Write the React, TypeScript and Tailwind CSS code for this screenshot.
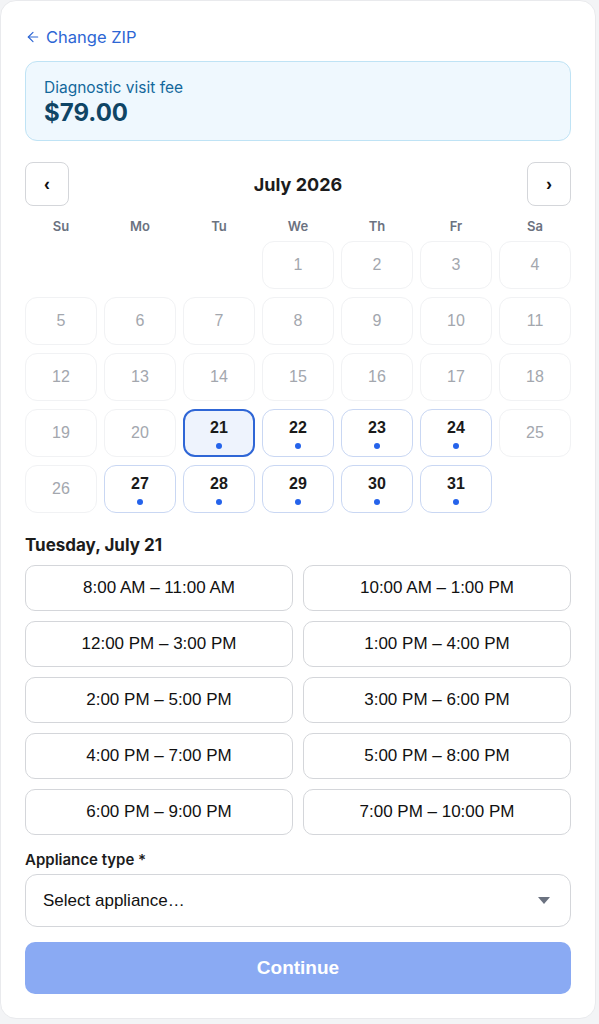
import { ArrowLeft } from 'lucide-react';

const weekdays = ['Su', 'Mo', 'Tu', 'We', 'Th', 'Fr', 'Sa'];

const slots = [
  '8:00 AM – 11:00 AM',
  '10:00 AM – 1:00 PM',
  '12:00 PM – 3:00 PM',
  '1:00 PM – 4:00 PM',
  '2:00 PM – 5:00 PM',
  '3:00 PM – 6:00 PM',
  '4:00 PM – 7:00 PM',
  '5:00 PM – 8:00 PM',
  '6:00 PM – 9:00 PM',
  '7:00 PM – 10:00 PM',
];

const available = [21, 22, 23, 24, 27, 28, 29, 30, 31];
const selected = 21;

function DayCell({ day }: { day: number }) {
  const isAvailable = available.includes(day);
  const isSelected = day === selected;

  if (!isAvailable) {
    return (
      <div className="h-12 rounded-xl border border-[#f1f2f4] flex items-center justify-center text-[16px] text-[#a3a7ae] font-['Liberation_Sans',sans-serif]">
        {day}
      </div>
    );
  }

  return (
    <button
      className={
        isSelected
          ? "h-12 rounded-xl border-2 border-[#2f66d6] bg-[#eef3fd] flex flex-col items-center justify-center font-['Liberation_Sans',sans-serif]"
          : "h-12 rounded-xl border border-[#c9d7f3] bg-white flex flex-col items-center justify-center font-['Liberation_Sans',sans-serif]"
      }
    >
      <span className="text-[16px] font-bold leading-5 text-[#1a1a1a]">{day}</span>
      <span className="mt-[5px] w-[6px] h-[6px] rounded-full bg-[#2563eb]" />
    </button>
  );
}

export default function App() {
  // July 2026 starts on a Wednesday
  const cells: (number | null)[] = [null, null, null];
  for (let d = 1; d <= 31; d++) cells.push(d);

  return (
    <div className="min-h-screen bg-[#f3f4f6] font-['Inter',sans-serif]">
      <div className="w-[596px] bg-white rounded-2xl border border-[#e9eaed] px-6 pt-6 pb-6">
        {/* Back link */}
        <button className="flex items-center gap-[5px] text-[16.5px] leading-6 text-[#2d66d4]">
          <ArrowLeft className="w-4 h-4" strokeWidth={1.75} />
          Change ZIP
        </button>

        {/* Fee */}
        <div className="mt-3 rounded-xl border border-[#bfe3f5] bg-[#eff8fe] px-[18px] pt-[16px] pb-[12px]">
          <div className="text-[15.5px] leading-5 text-[#13689c]">Diagnostic visit fee</div>
          <div className="text-[24px] leading-[30px] font-bold text-[#0f4565]">$79.00</div>
        </div>

        {/* Month nav */}
        <div className="mt-[21px] flex items-center justify-between">
          <button className="w-11 h-11 rounded-lg border border-[#d4d6da] bg-white flex items-center justify-center text-[18px] font-bold text-[#111] font-['Liberation_Sans',sans-serif]">
            ‹
          </button>
          <div className="text-[18px] font-bold text-[#1c1c1c]">July 2026</div>
          <button className="w-11 h-11 rounded-lg border border-[#d4d6da] bg-white flex items-center justify-center text-[18px] font-bold text-[#111] font-['Liberation_Sans',sans-serif]">
            ›
          </button>
        </div>

        {/* Weekdays */}
        <div className="mt-[13px] grid grid-cols-7 gap-x-[7px]">
          {weekdays.map((w) => (
            <div key={w} className="h-4 flex items-center justify-center text-[13px] font-semibold text-[#6b7280]">
              {w}
            </div>
          ))}
        </div>

        {/* Days */}
        <div className="mt-[6px] grid grid-cols-7 gap-x-[7px] gap-y-2">
          {cells.map((d, i) => (d === null ? <div key={`e${i}`} /> : <DayCell key={d} day={d} />))}
        </div>

        {/* Selected date */}
        <div className="mt-5 text-[17px] leading-6 font-bold text-[#1c1c1c]">Tuesday, July 21</div>

        {/* Time slots */}
        <div className="mt-2 grid grid-cols-2 gap-[10px]">
          {slots.map((s) => (
            <button
              key={s}
              className="h-[46px] rounded-[10px] border border-[#d4d6da] bg-white text-[17px] text-[#111] font-['Liberation_Sans',sans-serif]"
            >
              {s}
            </button>
          ))}
        </div>

        {/* Appliance */}
        <div className="mt-[15px] text-[15px] leading-5 font-semibold text-[#1c1c1c]">Appliance type *</div>
        <div className="mt-1 h-[53px] rounded-xl border border-[#d4d6da] bg-white flex items-center justify-between pl-[17px] pr-[20px]">
          <span className="text-[17px] text-[#111] font-['Liberation_Sans',sans-serif]">Select appliance…</span>
          <svg width="12" height="7" viewBox="0 0 12 7">
            <path d="M0 0 L12 0 L6 7 Z" fill="#6b7280" />
          </svg>
        </div>

        {/* Continue */}
        <button className="mt-[15px] w-full h-[52px] rounded-[10px] bg-[#8aaaf3] text-white text-[19px] font-bold font-['Liberation_Sans',sans-serif]">
          Continue
        </button>
      </div>
    </div>
  );
}
